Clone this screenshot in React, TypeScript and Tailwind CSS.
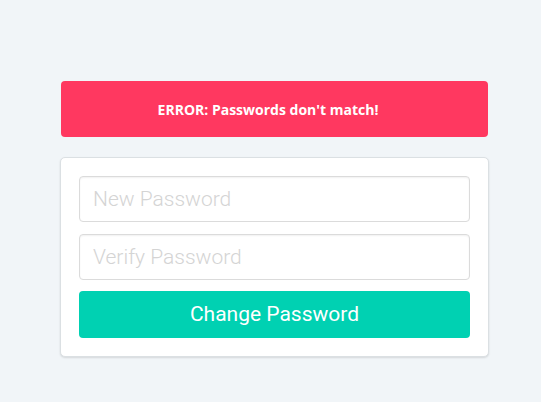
export default function App() {
  return (
    <div className="min-h-[402px] w-full bg-[#f1f5f8] pl-[60px] pt-[81px]">
      <div className="w-[429px]">
        {/* Error banner */}
        <div className="mx-px flex h-[56px] items-center justify-center rounded-[4px] bg-[#ff3860] pr-[13px]">
          <span className="font-['Open_Sans',sans-serif] text-[14px] font-bold text-white">
            ERROR: Passwords don&apos;t match!
          </span>
        </div>

        {/* Form card */}
        <div className="mt-[20px] flex flex-col rounded-[5px] border border-[#dbe0e3] bg-white p-[18px] shadow-[0_1px_2px_rgba(10,10,10,0.12)]">
          <input
            type="password"
            placeholder="New Password"
            className="h-[46px] w-full rounded-[4px] border border-[#dbdbdb] px-[13px] font-['Roboto',sans-serif] text-[21px] font-light text-[#363636] outline-none placeholder:text-[#d4d4d4] shadow-[inset_0_1px_2px_rgba(10,10,10,0.06)]"
          />
          <input
            type="password"
            placeholder="Verify Password"
            className="mt-[12px] h-[46px] w-full rounded-[4px] border border-[#dbdbdb] px-[13px] font-['Roboto',sans-serif] text-[21px] font-light text-[#363636] outline-none placeholder:text-[#d4d4d4] shadow-[inset_0_1px_2px_rgba(10,10,10,0.06)]"
          />
          <button className="mt-[11px] h-[47px] w-full rounded-[4px] bg-[#00d1b2] font-['Roboto',sans-serif] text-[21px] text-white">
            Change Password
          </button>
        </div>
      </div>
    </div>
  )
}
